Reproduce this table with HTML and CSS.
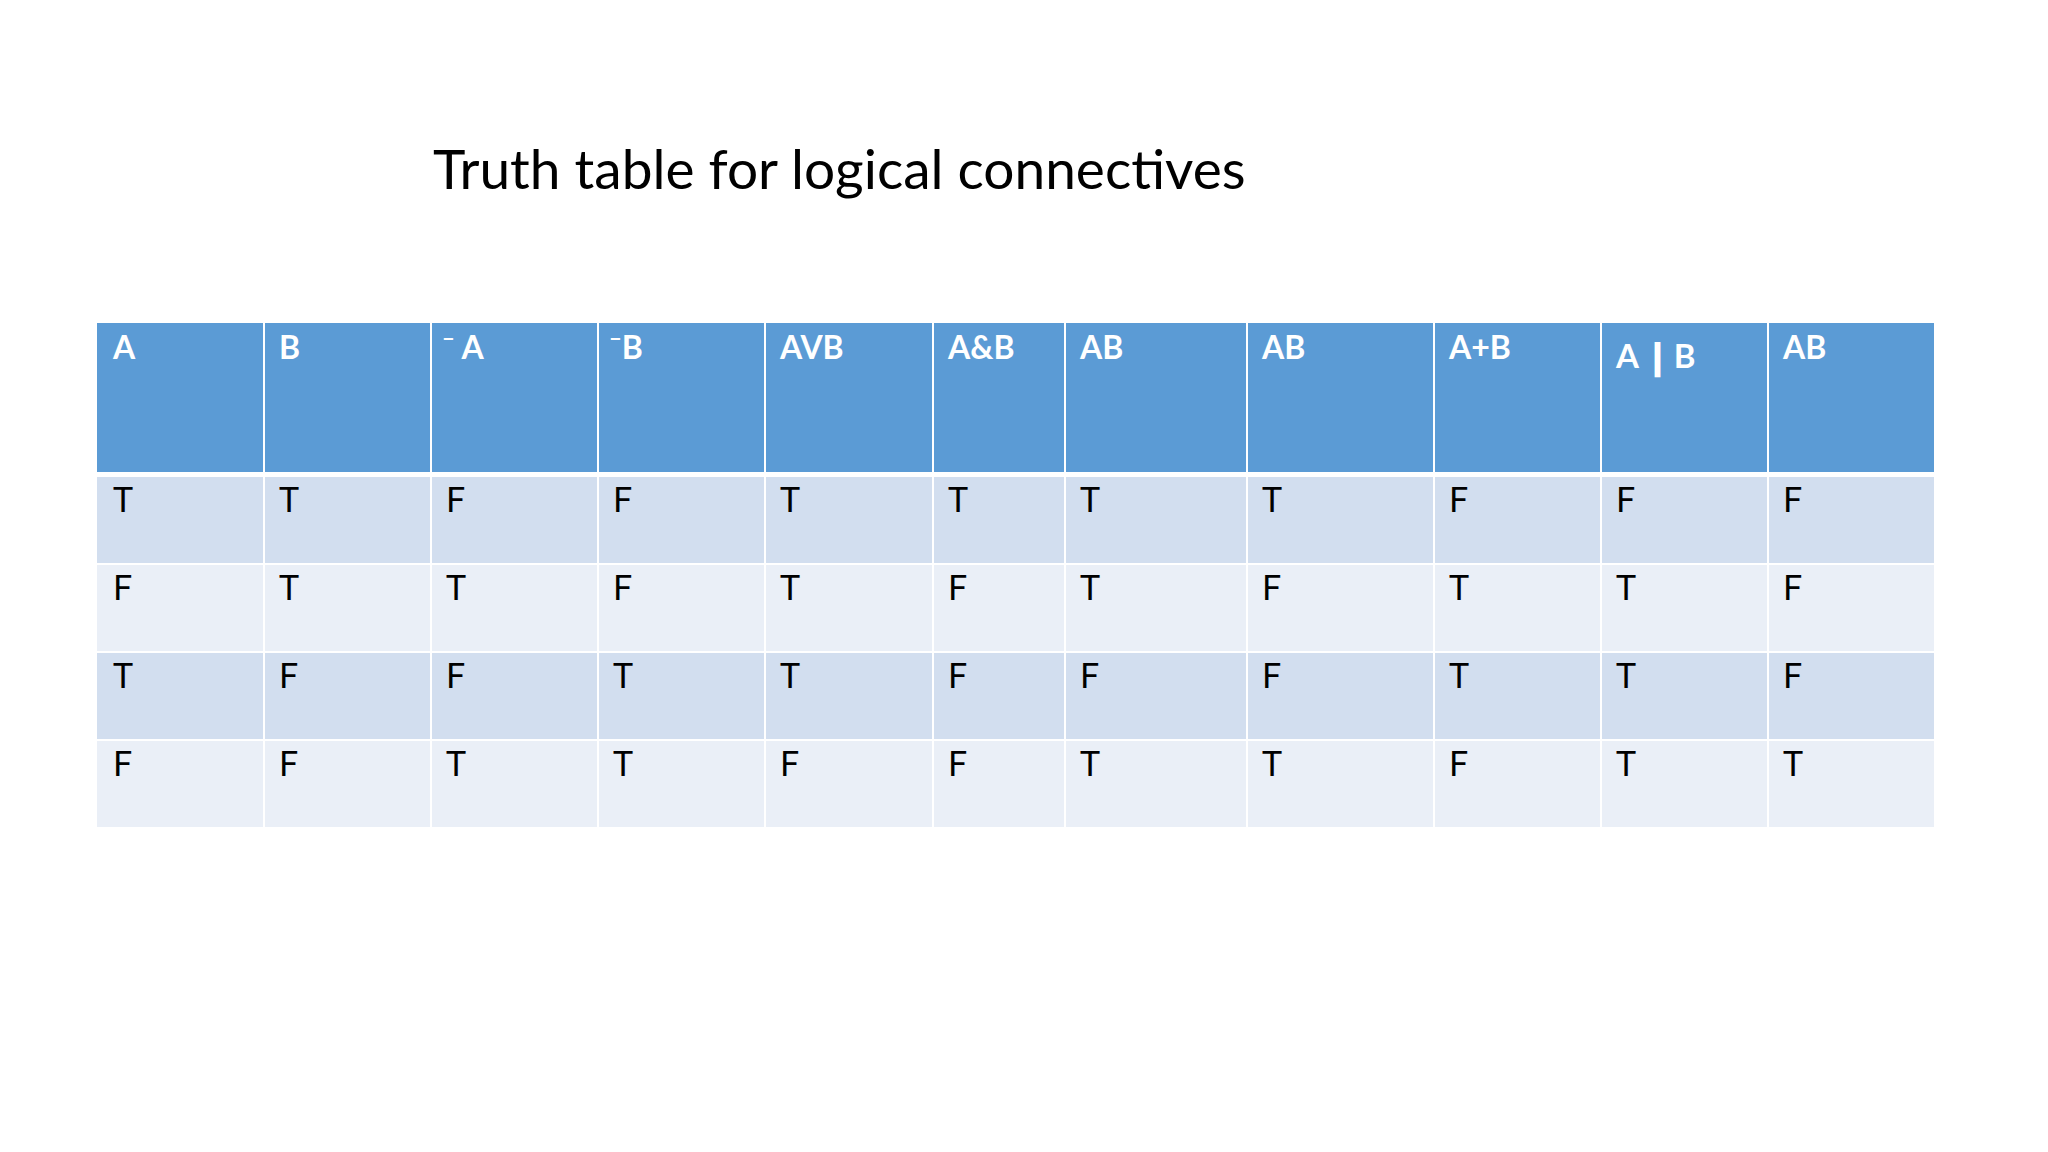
FILE: index.html
```html
<!DOCTYPE html>
<html>
<head>
<meta charset="utf-8">
<link rel="stylesheet" href="styles.css">
</head>
<body>
<div class="slide">
  <h1 class="title">Truth table for logical connectives</h1>
  <div class="table">
    <div class="row head">
      <div class="cell">A</div>
      <div class="cell">B</div>
      <div class="cell"><span class="neg">¯</span> A</div>
      <div class="cell"><span class="neg">¯</span>B</div>
      <div class="cell">AVB</div>
      <div class="cell">A&amp;B</div>
      <div class="cell">AB</div>
      <div class="cell">AB</div>
      <div class="cell">A+B</div>
      <div class="cell low">A<span class="bar">|</span>B</div>
      <div class="cell">AB</div>
    </div>
    <div class="row odd first">
      <div class="cell">T</div><div class="cell">T</div><div class="cell">F</div><div class="cell">F</div><div class="cell">T</div><div class="cell">T</div><div class="cell">T</div><div class="cell">T</div><div class="cell">F</div><div class="cell">F</div><div class="cell">F</div>
    </div>
    <div class="row even">
      <div class="cell">F</div><div class="cell">T</div><div class="cell">T</div><div class="cell">F</div><div class="cell">T</div><div class="cell">F</div><div class="cell">T</div><div class="cell">F</div><div class="cell">T</div><div class="cell">T</div><div class="cell">F</div>
    </div>
    <div class="row odd">
      <div class="cell">T</div><div class="cell">F</div><div class="cell">F</div><div class="cell">T</div><div class="cell">T</div><div class="cell">F</div><div class="cell">F</div><div class="cell">F</div><div class="cell">T</div><div class="cell">T</div><div class="cell">F</div>
    </div>
    <div class="row even">
      <div class="cell">F</div><div class="cell">F</div><div class="cell">T</div><div class="cell">T</div><div class="cell">F</div><div class="cell">F</div><div class="cell">T</div><div class="cell">T</div><div class="cell">F</div><div class="cell">T</div><div class="cell">T</div>
    </div>
  </div>
</div>
</body>
</html>
```
FILE: styles.css
```css
html, body {
  margin: 0;
  padding: 0;
  background: #ffffff;
}
.slide {
  width: 2048px;
  height: 1152px;
  background: #ffffff;
  font-family: Lato, "Liberation Sans", sans-serif;
  color: #000000;
  padding-top: 135px;
  box-sizing: border-box;
}
.title {
  margin: 0 0 0 433px;
  font-size: 55px;
  font-weight: 400;
  line-height: 1.2;
}
.table {
  margin-top: 122px;
  margin-left: 97px;
  width: 1837px;
  display: flex;
  flex-direction: column;
}
.row {
  display: grid;
  grid-template-columns: 166px 167px 167px 167px 168px 132px 182px 187px 167px 167px 167px;
}
.row .cell {
  box-sizing: border-box;
  border-left: 2px solid #ffffff;
  padding-left: 14px;
  line-height: 1.2;
}
.row .cell:first-child {
  border-left: none;
  padding-left: 16px;
}
.head {
  height: 149px;
}
.head .cell {
  background: #5b9bd5;
  color: #ffffff;
  font-weight: 700;
  font-size: 32px;
  padding-top: 5px;
}
.head .cell.low {
  padding-top: 12px;
  font-size: 33px;
}
.neg {
  display: inline-block;
  font-weight: 400;
  margin-left: -4px;
  position: relative;
  top: 1px;
}
.bar {
  display: inline-block;
  font-size: 34px;
  font-weight: 700;
  -webkit-text-stroke: 2.5px #ffffff;
  margin: 0 12px 0 14px;
  position: relative;
  top: 2px;
}
.odd .cell, .even .cell {
  height: 88px;
  border-top: 2px solid #ffffff;
  font-size: 34px;
  padding-top: 2px;
}
.first .cell {
  height: 91px;
  border-top: 5px solid #ffffff;
}
.odd .cell {
  background: #d2deef;
}
.even .cell {
  background: #eaeff7;
}
```
